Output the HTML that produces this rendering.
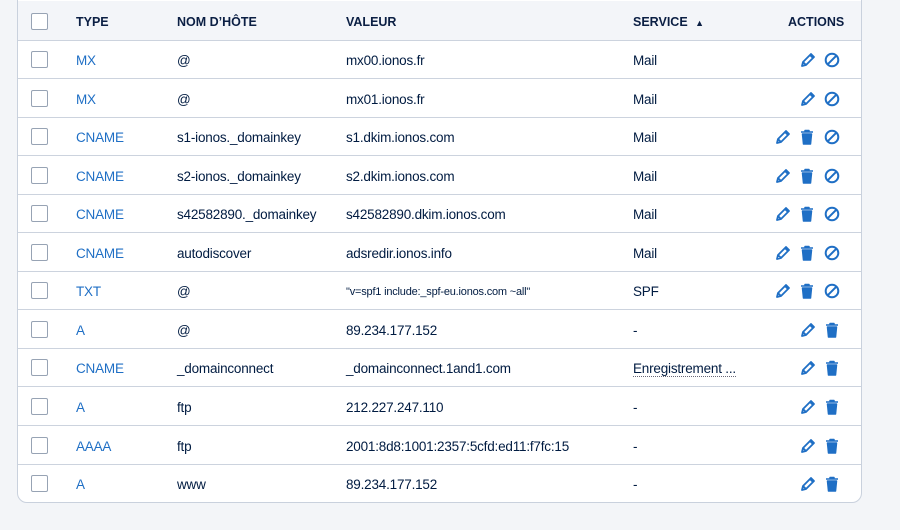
<!DOCTYPE html>
<html><head><meta charset="utf-8"><style>
body{margin:0;background:#f3f5f8;width:900px;height:530px;overflow:hidden;font-family:"Liberation Sans",sans-serif;color:#001b41}
.t{position:absolute;left:17px;top:-10px;width:843px;height:511px;background:#fff;border:1px solid #c9d1dd;border-radius:10px;overflow:hidden}
.r{position:absolute;left:0;width:843px;height:38px;border-bottom:1px solid #ccd3de;font-size:13.5px;letter-spacing:-0.2px}
.h{background:#f3f5f9;font-weight:bold;font-size:12.5px;color:#0b1f44;letter-spacing:0}
.c{position:absolute;top:13px;white-space:nowrap}
.cb{position:absolute;left:13px;top:11px;width:15px;height:15px;border:1px solid #97a3b4;border-radius:2px;background:#fff}
.ty{color:#1f6fc5}
svg{position:absolute;top:11px}
</style></head><body>
<div class="t">
<div class="r h" style="top:10px;height:39px"><div class="cb" style="top:12px"></div><div class="c" style="left:58px;top:14px">TYPE</div><div class="c" style="left:159px;top:14px">NOM D’HÔTE</div><div class="c" style="left:328px;top:14px">VALEUR</div><div class="c" style="left:615px;top:14px">SERVICE <span style="font-size:9px;margin-left:4px">▲</span></div><div class="c" style="left:770px;top:14px">ACTIONS</div></div>
<div id="rows"></div>
</div>
<script>
var d=[["MX","@","mx00.ionos.fr","Mail","pb"],["MX","@","mx01.ionos.fr","Mail","pb"],["CNAME","s1-ionos._domainkey","s1.dkim.ionos.com","Mail","ptb"],["CNAME","s2-ionos._domainkey","s2.dkim.ionos.com","Mail","ptb"],["CNAME","s42582890._domainkey","s42582890.dkim.ionos.com","Mail","ptb"],["CNAME","autodiscover","adsredir.ionos.info","Mail","ptb"],["TXT","@","\"v=spf1 include:_spf-eu.ionos.com ~all\"","SPF","ptb"],["A","@","89.234.177.152","-","pt"],["CNAME","_domainconnect","_domainconnect.1and1.com","E","pt"],["A","ftp","212.227.247.110","-","pt"],["AAAA","ftp","2001:8d8:1001:2357:5cfd:ed11:f7fc:15","-","pt"],["A","www","89.234.177.152","-","pt"]];
var P='<path d="M3 15 L4 11 L12 3 L15 6 L7 14 Z M4 11 L7 14 M11 4 L14 7" fill="none" stroke="#1f6fc5" stroke-width="1.8" stroke-linejoin="round"/>';
var T='<path d="M3 4 H15 M7 4 V2.5 H11 V4 M4.5 6 H13.5 L12.5 16 H5.5 Z" fill="#1f6fc5" stroke="#1f6fc5" stroke-width="1.5" stroke-linejoin="round"/>';
var B='<circle cx="9" cy="9" r="6.3" fill="none" stroke="#1f6fc5" stroke-width="2"/><path d="M4.8 13.2 L13.2 4.8" stroke="#1f6fc5" stroke-width="2"/>';
var h='';
d.forEach(function(r,i){var y=49+i*38.55;
var s=r[3]=="E"?'<span style="border-bottom:1px dotted #667">Enregistrement ...</span>':r[3];
var ic='';
function svg(x,p){return '<svg style="left:'+x+'px" width="18" height="18" viewBox="0 0 18 18">'+p+'</svg>';}
if(r[4]=="pb")ic=svg(781,P)+svg(805,B);
else if(r[4]=="ptb")ic=svg(756,P)+svg(780,T)+svg(805,B);
else ic=svg(781,P)+svg(805,T);
var vs=r[2][0]=='"'?'font-size:11px;top:15px;':'';
h+='<div class="r" style="top:'+y+'px"><div class="cb"></div><div class="c ty" style="left:58px">'+r[0]+'</div><div class="c" style="left:159px">'+r[1]+'</div><div class="c" style="left:328px;'+vs+'">'+r[2]+'</div><div class="c" style="left:615px">'+s+'</div>'+ic+'</div>';});
document.getElementById('rows').innerHTML=h;
</script>
</body></html>
